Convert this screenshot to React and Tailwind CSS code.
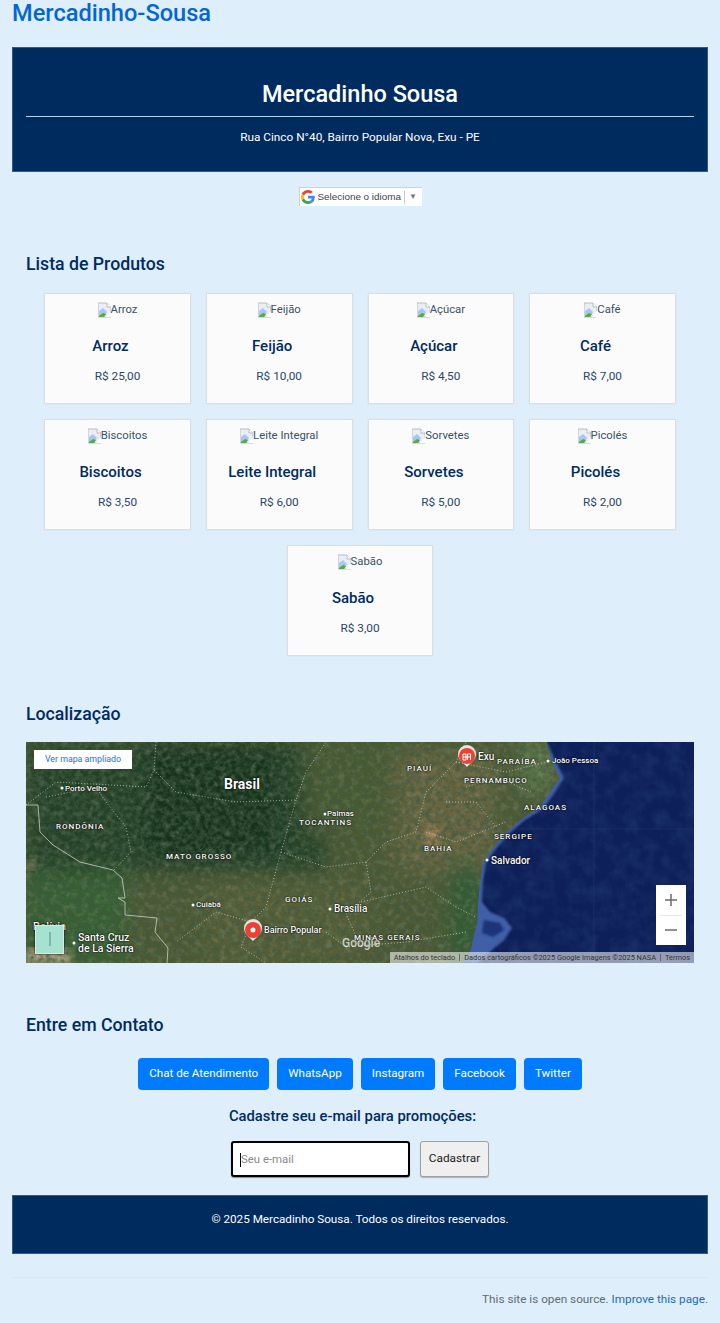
import React from 'react';

const products = [
  { name: 'Arroz', price: 'R$ 25,00' },
  { name: 'Feijão', price: 'R$ 10,00' },
  { name: 'Açúcar', price: 'R$ 4,50' },
  { name: 'Café', price: 'R$ 7,00' },
  { name: 'Biscoitos', price: 'R$ 3,50' },
  { name: 'Leite Integral', price: 'R$ 6,00' },
  { name: 'Sorvetes', price: 'R$ 5,00' },
  { name: 'Picolés', price: 'R$ 2,00' },
  { name: 'Sabão', price: 'R$ 3,00' },
];

const contacts = ['Chat de Atendimento', 'WhatsApp', 'Instagram', 'Facebook', 'Twitter'];

const mapLabels = [
  { text: 'Brasil', cls: 'left-[198px] top-[35px] text-[14px] font-bold' },
  { text: 'Porto Velho', cls: 'left-[39px] top-[43px] text-[8px] font-medium' },
  { text: 'RONDÔNIA', cls: 'left-[30px] top-[81px] text-[8px] font-medium tracking-[1px]' },
  { text: 'MATO GROSSO', cls: 'left-[140px] top-[111px] text-[8px] font-medium tracking-[1px]' },
  { text: 'Palmas', cls: 'left-[301px] top-[68px] text-[8px] font-medium' },
  { text: 'TOCANTINS', cls: 'left-[273px] top-[77px] text-[8px] font-medium tracking-[1px]' },
  { text: 'Cuiabá', cls: 'left-[170px] top-[159px] text-[8px] font-medium' },
  { text: 'GOIÁS', cls: 'left-[259px] top-[154px] text-[8px] font-medium tracking-[1px]' },
  { text: 'Brasília', cls: 'left-[308px] top-[162px] text-[10px] font-medium' },
  { text: 'Bairro Popular', cls: 'left-[238px] top-[184px] text-[9px] font-medium' },
  { text: 'Bolívia', cls: 'left-[7px] top-[179px] text-[11px] font-medium' },
  { text: 'Santa Cruz', cls: 'left-[52px] top-[191px] text-[10.5px] font-medium' },
  { text: 'de La Sierra', cls: 'left-[52px] top-[202px] text-[10.5px] font-medium' },
  { text: 'PIAUÍ', cls: 'left-[381px] top-[23px] text-[8px] font-medium tracking-[1px]' },
  { text: 'Exu', cls: 'left-[452px] top-[10px] text-[10px] font-medium' },
  { text: 'PARAÍBA', cls: 'left-[471px] top-[16px] text-[8px] font-medium tracking-[1px]' },
  { text: 'João Pessoa', cls: 'left-[526px] top-[15px] text-[8px] font-medium' },
  { text: 'PERNAMBUCO', cls: 'left-[438px] top-[35px] text-[8px] font-medium tracking-[1px]' },
  { text: 'ALAGOAS', cls: 'left-[498px] top-[62px] text-[8px] font-medium tracking-[1px]' },
  { text: 'SERGIPE', cls: 'left-[468px] top-[91px] text-[8px] font-medium tracking-[1px]' },
  { text: 'BAHIA', cls: 'left-[398px] top-[103px] text-[8px] font-medium tracking-[1px]' },
  { text: 'Salvador', cls: 'left-[465px] top-[114px] text-[10px] font-medium' },
  { text: 'MINAS GERAIS', cls: 'left-[328px] top-[192px] text-[8px] font-medium tracking-[1px]' },
];

const BrokenImage = () => (
  <svg width="13" height="16" viewBox="1 0 13 16" className="shrink-0">
    <path d="M1 1h9l4 4v10H1z" fill="#e8eef5" stroke="#b9bec4" />
    <path d="M10 1v4h4" fill="#fff" stroke="#b9bec4" />
    <path d="M2 9l4-3 4 4-3 5H2z" fill="#a9c6ef" />
    <path d="M2 14l4-3 3 1-2 3H2z" fill="#5aa648" />
    <path d="M9 15l5-6v6z" fill="#fff" />
  </svg>
);

const GoogleG = () => (
  <svg width="14" height="14" viewBox="0 0 48 48" className="shrink-0">
    <path fill="#EA4335" d="M24 9.5c3.5 0 6.700 1.200 9.200 3.600l6.900-6.900C35.900 2.400 30.500 0 24 0 14.600 0 6.500 5.400 2.600 13.200l8 6.200C12.500 13.600 17.800 9.500 24 9.500z" />
    <path fill="#4285F4" d="M47 24.500c0-1.600-.1-3.100-.4-4.500H24v9h12.900c-.6 3-2.200 5.500-4.700 7.200l7.700 6C44.400 38 47 31.800 47 24.500z" />
    <path fill="#FBBC05" d="M10.500 28.600c-.5-1.400-.8-3-.8-4.600s.3-3.200.8-4.600l-8-6.200C.9 16.500 0 20.100 0 24s.9 7.500 2.600 10.800l7.900-6.200z" />
    <path fill="#34A853" d="M24 48c6.500 0 11.900-2.100 15.900-5.800l-7.700-6c-2.200 1.500-4.900 2.300-8.200 2.300-6.200 0-11.500-4.200-13.400-9.800l-8 6.200C6.500 42.600 14.600 48 24 48z" />
  </svg>
);

const MapArt = () => (
  <svg viewBox="0 0 668 221" className="absolute inset-0 h-full w-full" preserveAspectRatio="none">
    <defs>
      <filter id="blur12"><feGaussianBlur stdDeviation="10" /></filter>
      <filter id="blur5"><feGaussianBlur stdDeviation="4" /></filter>
      <filter id="blur1"><feGaussianBlur stdDeviation="1" /></filter>
      <filter id="grain" x="0" y="0" width="100%" height="100%">
        <feTurbulence type="fractalNoise" baseFrequency="0.2" numOctaves="4" seed="7" />
        <feColorMatrix values="0 0 0 0 0.05  0 0 0 0 0.1  0 0 0 0 0.05  1.8 0 0 0 -0.66" />
      </filter>
      <filter id="lightGrain" x="0" y="0" width="100%" height="100%">
        <feTurbulence type="fractalNoise" baseFrequency="0.16" numOctaves="4" seed="21" />
        <feColorMatrix values="0 0 0 0 0.6  0 0 0 0 0.6  0 0 0 0 0.42  1.4 0 0 0 -0.62" />
      </filter>
      <filter id="oceanGrain" x="0" y="0" width="100%" height="100%">
        <feTurbulence type="fractalNoise" baseFrequency="0.07" numOctaves="4" seed="3" />
        <feColorMatrix values="0 0 0 0 0.01  0 0 0 0 0.03  0 0 0 0 0.14  1.8 0 0 0 -0.7" />
      </filter>
      <clipPath id="land">
        <path d="M0 0H521L526 20 534 36 524 50 514 65 497 76 481 90 467 106 457 120 454 140 452 160 451 180 444 210 436 221H0z" />
      </clipPath>
    </defs>
    <rect width="668" height="221" fill="#0e2059" />
    <rect width="668" height="221" filter="url(#oceanGrain)" />
    <path d="M521 0L529 18 538 36 527 53 517 67 499 78 483 92 469 108 460 121 457 140 456 160 464 170 478 176 486 186 478 198 466 208 452 221H430L444 205 448 160 450 130 460 105 480 85 510 60 522 45 522 20z" fill="#415ea6" filter="url(#blur1)" />
    <path d="M458 178l16 3 4 7-11 7-11-4z" fill="#1a3478" filter="url(#blur1)" />
    <g clipPath="url(#land)">
      <rect width="668" height="221" fill="#4d5934" />
      <g filter="url(#blur12)">
        <rect x="0" y="0" width="300" height="130" fill="#243f25" />
        <rect x="120" y="0" width="130" height="115" fill="#19331c" />
        <rect x="0" y="130" width="100" height="90" fill="#356033" />
        <rect x="280" y="0" width="100" height="90" fill="#485a32" />
        <rect x="370" y="10" width="100" height="120" fill="#676540" />
        <rect x="180" y="140" width="160" height="80" fill="#565f39" />
        <rect x="425" y="120" width="30" height="100" fill="#2f5c33" />
        <rect x="495" y="0" width="30" height="50" fill="#5f7a4b" />
      </g>
      <ellipse cx="406" cy="93" rx="9" ry="10" fill="#a88256" filter="url(#blur5)" />
      <rect x="0" y="207" width="45" height="14" fill="#b5a887" filter="url(#blur5)" />
      <rect x="0" y="118" width="10" height="10" fill="#8a8268" filter="url(#blur5)" />
      <rect width="668" height="221" filter="url(#grain)" />
      <rect width="668" height="221" filter="url(#lightGrain)" opacity="0.3" />
    </g>
    <path d="M0 63H12L14 90 27 103 54 120 87 128 96 136 99 156 92 156 99 160V173L131 176 129 190 142 206 141 221" fill="none" stroke="#d8dccf" strokeOpacity="0.8" strokeWidth="0.9" />
    <g fill="none" stroke="#ffffff" strokeOpacity="0.7" strokeWidth="0.8" strokeDasharray="1 2">
      <path d="M0 63L30 40 120 45 128 28 130 0" />
      <path d="M128 28L150 50 210 60 270 58 280 30 300 0" />
      <path d="M20 55L70 45 80 60 100 85 105 110 88 128" />
      <path d="M270 58L255 110 240 165 225 180 190 170 150 200" />
      <path d="M255 110L300 125 340 120 360 100 390 90 400 50 430 20 440 0" />
      <path d="M340 120L345 150 320 172 335 205" />
      <path d="M430 20L480 30 520 20M440 45L470 35 505 50M420 60L450 60 470 85M400 90L430 100 480 80" />
      <path d="M335 160L400 145 430 165 450 175M320 205L380 200 440 190" />
      <path d="M225 180L215 205 240 221M300 190L320 205" />
    </g>
    <path d="M568 0V221" stroke="#3a4f8a" strokeOpacity="0.45" strokeWidth="0.7" />
    <path d="M420 87H668" stroke="#3a4f8a" strokeOpacity="0.35" strokeWidth="0.7" />
    <g fill="#fff">
      <circle cx="36" cy="46" r="1.500" />
      <circle cx="299" cy="72" r="1.500" />
      <circle cx="167" cy="163" r="1.500" />
      <circle cx="304" cy="167" r="1.500" />
      <circle cx="48" cy="201" r="1.500" />
      <circle cx="522" cy="19" r="1.500" />
      <circle cx="461" cy="118" r="1.500" />
    </g>
    <path d="M227 199c-5-5-9-8-9-13a9 9 0 0 1 18 0c0 5-4 8-9 13z" fill="#e9e4dc" />
    <circle cx="227" cy="188" r="8" fill="#ea4335" />
    <circle cx="227" cy="188" r="2.500" fill="#fff" />
    <path d="M441 25c-5-5-9-8-9-13a9 9 0 0 1 18 0c0 5-4 8-9 13z" fill="#e9e4dc" />
    <circle cx="441" cy="14" r="8" fill="#ea4335" />
    <path d="M437 18v-6h3v6zM441.500 18v-6h3v6M437 15h7" fill="none" stroke="#fff" strokeWidth="1" />
  </svg>
);

const GoogleMap = () => (
  <div className="relative mt-[17px] h-[221px] overflow-hidden font-['Roboto',sans-serif]">
    <MapArt />
    <span className="absolute left-[316px] top-[195px] text-[12px] font-medium leading-none text-white/70">Google</span>
    {mapLabels.map((l) => (
      <span
        key={l.text}
        className={`absolute whitespace-nowrap leading-none text-white [text-shadow:0_0_2px_#000,0_0_1px_#000] ${l.cls}`}
      >
        {l.text}
      </span>
    ))}
    <div className="absolute left-[8px] top-[8px] flex h-[19px] w-[98px] items-center justify-center bg-white text-[8.8px] text-[#1a73e8]">
      Ver mapa ampliado
    </div>
    <div className="absolute bottom-[9px] left-[9px] h-[29px] w-[29px] border border-[#dfe6e2] bg-[#a6e2d0] shadow-[0_0_2px_#000]">
      <div className="ml-[13px] mt-[6px] h-[14px] w-[2px] bg-[#7fb6a8]" />
    </div>
    <div className="absolute right-[8px] top-[143px] flex h-[60px] w-[30px] flex-col items-center bg-white text-[#6b6b6b]">
      <svg width="30" height="30" viewBox="0 0 30 30"><path d="M15 9v12M9 15h12" stroke="#6b6b6b" strokeWidth="1.500" /></svg>
      <div className="h-px w-[22px] bg-[#e6e6e6]" />
      <svg width="30" height="29" viewBox="0 0 30 29"><path d="M9 14h12" stroke="#6b6b6b" strokeWidth="1.500" /></svg>
    </div>
    <div className="absolute bottom-0 right-0 flex h-[11px] items-center bg-white/55 text-[7.4px] leading-none text-[#333]">
      <span className="px-[4px]">Atalhos do teclado</span>
      <span className="border-l border-[#666] px-[4px]">Dados cartográficos ©2025 Google Imagens ©2025 NASA</span>
      <span className="border-l border-[#666] px-[4px]">Termos</span>
    </div>
  </div>
);

const ProductCard = ({ name, price }) => (
  <div className="flex h-[111px] w-[146.67px] flex-col items-center border border-[#d9dfe4] bg-[#fbfbfc] pt-[7px] shadow-[0_0_2px_rgba(0,0,0,0.05)]">
    <div className="flex h-[18px] items-center text-[11.3px] leading-none text-[#3a5068]">
      <BrokenImage />
      <span>{name}</span>
    </div>
    <h3 className="mt-[17px] pr-[14px] text-[15px] font-medium leading-[20px] text-[#002b5f]">{name}</h3>
    <p className="mt-[11px] text-[11.8px] leading-[18px] text-[#2a4668]">{price}</p>
  </div>
);

const SectionTitle = ({ children, className }) => (
  <h2 className={`px-[14px] text-[17.7px] font-medium leading-[22px] text-[#002b5f] ${className}`}>{children}</h2>
);

export default function App() {
  return (
    <div className="min-h-[1323px] bg-[#deeefb] px-[12px] font-['Roboto',sans-serif]">
      <h1 className="h-[26px] text-[23.6px] font-medium leading-[26px] text-[#0366d6]">Mercadinho-Sousa</h1>

      <header className="mt-[21px] flex h-[125px] flex-col items-center border border-[#2f5c8f] bg-[#002b5f] px-[13px] pt-[32px] text-white">
        <p className="text-[23.5px] font-medium leading-[28px]">Mercadinho Sousa</p>
        <hr className="mt-[8px] w-full border-t border-[#b7d3ee]" />
        <p className="mt-[12px] text-[11.8px] leading-[16px]">Rua Cinco N°40, Bairro Popular Nova, Exu - PE</p>
      </header>

      <div className="mt-[15px] flex justify-center">
        <div className="flex h-[19px] w-[123px] items-center border-t border-l border-[#d0d0d0] bg-white pl-[1px] text-[9.9px] text-[#444]">
          <GoogleG />
          <span className="ml-[3px] font-['Liberation_Sans',sans-serif]">Selecione o idioma</span>
          <span className="ml-[3px] h-[13px] w-px bg-[#ccc]" />
          <span className="ml-[4px] text-[8px] text-[#777]">▼</span>
        </div>
      </div>

      <SectionTitle className="mt-[47px]">Lista de Produtos</SectionTitle>
      <div className="mt-[18px] flex flex-wrap justify-center gap-[15px] px-[32px]">
        {products.map((p) => (
          <ProductCard key={p.name} {...p} />
        ))}
      </div>

      <SectionTitle className="mt-[47px]">Localização</SectionTitle>
      <div className="px-[14px]">
        <GoogleMap />
      </div>

      <SectionTitle className="mt-[51px]">Entre em Contato</SectionTitle>
      <div className="mt-[22px] flex justify-center gap-[8px]">
        {contacts.map((c) => (
          <a key={c} className="flex h-[32px] items-center rounded-[4px] bg-[#007bff] px-[11px] text-[11.65px] text-white">
            {c}
          </a>
        ))}
      </div>

      <p className="mt-[16px] pr-[15px] text-center text-[14.8px] font-medium leading-[20px] text-[#002b5f]">Cadastre seu e-mail para promoções:</p>
      <div className="mt-[15px] flex justify-center gap-[10px]">
        <div className="flex h-[36px] w-[179px] items-center rounded-[3px] border-2 border-black bg-white pl-[7px] pt-px text-[11.4px] text-[#8a8a8a] shadow-[0_1px_1px_rgba(0,0,0,0.4)]">
          <span className="h-[14px] w-px bg-black" />
          <span>Seu e-mail</span>
        </div>
        <button className="h-[36px] w-[69px] rounded-[3px] border border-[#a0a0a0] bg-[#efefef] text-[11.8px] text-[#222] shadow-[0_1px_1px_rgba(0,0,0,0.25)]">
          Cadastrar
        </button>
      </div>

      <footer className="mt-[18px] flex h-[59px] justify-center border border-[#2f5c8f] bg-[#002b5f] pt-[15px] text-[11.7px] leading-[16px] text-white">
        © 2025 Mercadinho Sousa. Todos os direitos reservados.
      </footer>

      <div className="mt-[23px] border-t border-[#d8e8f5] pt-[13px] text-right text-[11.75px] leading-[16px] text-[#606c71]">
        This site is open source. <a className="text-[#1e6bb8]">Improve this page</a>.
      </div>
    </div>
  );
}
